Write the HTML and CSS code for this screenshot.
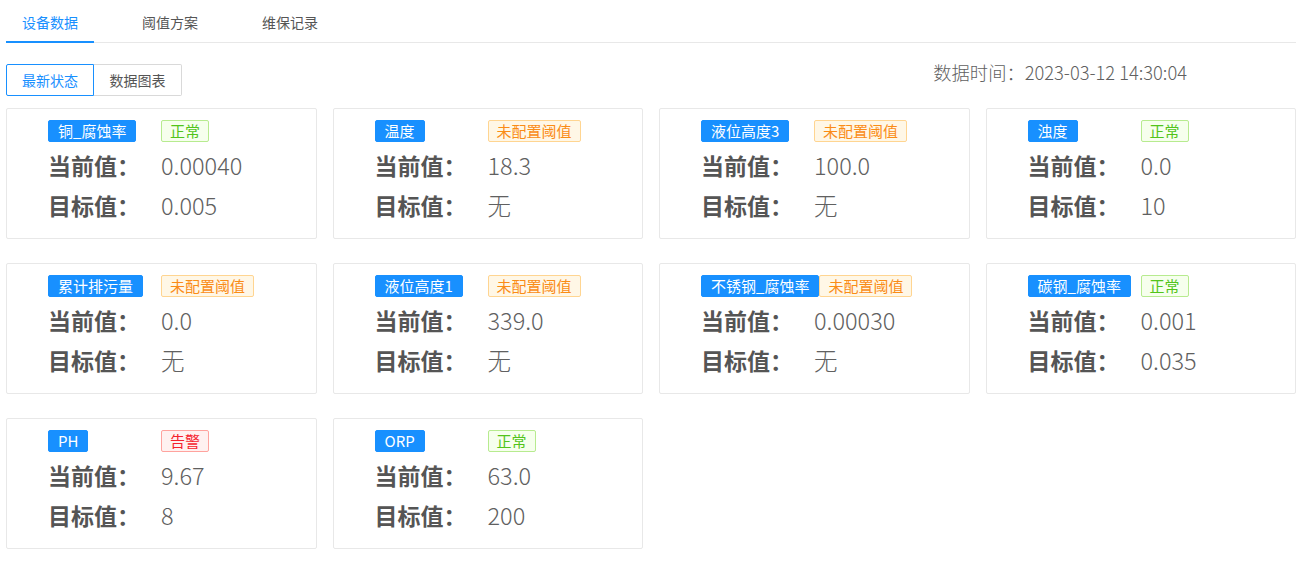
FILE: index.html
```html
<!DOCTYPE html>
<html lang="zh">
<head>
<meta charset="utf-8">
<title>设备数据</title>
<link rel="stylesheet" href="styles.css">
</head>
<body>
<div class="page">
  <div class="tabs">
    <div class="tab active">设备数据</div>
    <div class="tab">阈值方案</div>
    <div class="tab">维保记录</div>
  </div>
  <div class="toolbar">
    <div class="btn-group">
      <div class="btn active">最新状态</div>
      <div class="btn">数据图表</div>
    </div>
    <div class="time">数据时间：2023-03-12 14:30:04</div>
  </div>
  <div class="grid">
    <div class="card">
      <div class="head"><div class="name-wrap"><span class="name">铜_腐蚀率</span></div><span class="status ok">正常</span></div>
      <div class="row"><span class="label">当前值：</span><span class="value">0.00040</span></div>
      <div class="row"><span class="label">目标值：</span><span class="value">0.005</span></div>
    </div>
    <div class="card">
      <div class="head"><div class="name-wrap"><span class="name">温度</span></div><span class="status none">未配置阈值</span></div>
      <div class="row"><span class="label">当前值：</span><span class="value">18.3</span></div>
      <div class="row"><span class="label">目标值：</span><span class="value">无</span></div>
    </div>
    <div class="card">
      <div class="head"><div class="name-wrap"><span class="name">液位高度3</span></div><span class="status none">未配置阈值</span></div>
      <div class="row"><span class="label">当前值：</span><span class="value">100.0</span></div>
      <div class="row"><span class="label">目标值：</span><span class="value">无</span></div>
    </div>
    <div class="card">
      <div class="head"><div class="name-wrap"><span class="name">浊度</span></div><span class="status ok">正常</span></div>
      <div class="row"><span class="label">当前值：</span><span class="value">0.0</span></div>
      <div class="row"><span class="label">目标值：</span><span class="value">10</span></div>
    </div>
    <div class="card">
      <div class="head"><div class="name-wrap"><span class="name">累计排污量</span></div><span class="status none">未配置阈值</span></div>
      <div class="row"><span class="label">当前值：</span><span class="value">0.0</span></div>
      <div class="row"><span class="label">目标值：</span><span class="value">无</span></div>
    </div>
    <div class="card">
      <div class="head"><div class="name-wrap"><span class="name">液位高度1</span></div><span class="status none">未配置阈值</span></div>
      <div class="row"><span class="label">当前值：</span><span class="value">339.0</span></div>
      <div class="row"><span class="label">目标值：</span><span class="value">无</span></div>
    </div>
    <div class="card">
      <div class="head"><div class="name-wrap"><span class="name">不锈钢_腐蚀率</span></div><span class="status none">未配置阈值</span></div>
      <div class="row"><span class="label">当前值：</span><span class="value">0.00030</span></div>
      <div class="row"><span class="label">目标值：</span><span class="value">无</span></div>
    </div>
    <div class="card">
      <div class="head"><div class="name-wrap"><span class="name">碳钢_腐蚀率</span></div><span class="status ok">正常</span></div>
      <div class="row"><span class="label">当前值：</span><span class="value">0.001</span></div>
      <div class="row"><span class="label">目标值：</span><span class="value">0.035</span></div>
    </div>
    <div class="card">
      <div class="head"><div class="name-wrap"><span class="name">PH</span></div><span class="status warn">告警</span></div>
      <div class="row"><span class="label">当前值：</span><span class="value">9.67</span></div>
      <div class="row"><span class="label">目标值：</span><span class="value">8</span></div>
    </div>
    <div class="card">
      <div class="head"><div class="name-wrap"><span class="name">ORP</span></div><span class="status ok">正常</span></div>
      <div class="row"><span class="label">当前值：</span><span class="value">63.0</span></div>
      <div class="row"><span class="label">目标值：</span><span class="value">200</span></div>
    </div>
  </div>
</div>
</body>
</html>
```

FILE: styles.css
```css
* { box-sizing: border-box; }
html, body { margin: 0; padding: 0; background: #fff; }
body {
  font-family: "Noto Sans CJK SC", "Noto Sans", sans-serif;
  color: #606266;
}
.page { padding: 0 6px; }

.tabs {
  display: flex;
  gap: 32px;
  border-bottom: 1px solid #e8e8e8;
  height: 43px;
}
.tab {
  padding: 12px 16px 0;
  font-size: 14px;
  line-height: 20px;
  color: #555;
  height: 43px;
  border-bottom: 2px solid transparent;
  margin-bottom: -1px;
}
.tab.active {
  color: #1890ff;
  border-bottom-color: #1890ff;
}

.toolbar {
  display: flex;
  justify-content: space-between;
  align-items: flex-start;
  margin-top: 21px;
  padding-right: 109px;
}
.btn-group { display: flex; }
.btn {
  width: 88px;
  height: 32px;
  line-height: 30px;
  text-align: center;
  font-size: 14px;
  color: #555;
  border: 1px solid #d9d9d9;
  background: #fff;
}
.btn:first-child { border-radius: 2px 0 0 2px; }
.btn:last-child { border-radius: 0 2px 2px 0; border-left: none; }
.btn.active { color: #1890ff; border-color: #1890ff; }
.time {
  font-size: 18.3px;
  font-weight: 300;
  line-height: 20px;
  color: #606060;
  margin-top: -2px;
}

.grid {
  margin-top: 12px;
  display: grid;
  grid-template-columns: repeat(4, 1fr);
  column-gap: 16px;
  row-gap: 24px;
}
.card {
  border: 1px solid #e8e8e8;
  border-radius: 2px;
  height: 131px;
  padding: 11px 10px 8px 41px;
}
.head {
  display: flex;
  align-items: center;
  height: 22px;
  margin-bottom: 3px;
}
.name-wrap { min-width: 113px; display: flex; }
.name {
  display: inline-block;
  background: #1890ff;
  color: #fff;
  font-size: 15px;
  line-height: 20px;
  padding: 0 9px;
  border: 1px solid #1890ff;
  border-radius: 2px;
  white-space: nowrap;
}
.status {
  display: inline-block;
  font-size: 15px;
  line-height: 20px;
  padding: 0 8px;
  border: 1px solid;
  border-radius: 2px;
  white-space: nowrap;
}
.status.ok { color: #52c41a; background: #f6ffed; border-color: #b7eb8f; }
.status.none { color: #fa8c16; background: #fff7e6; border-color: #ffd591; }
.status.warn { color: #f5222d; background: #fff1f0; border-color: #ffa39e; }

.row {
  display: flex;
  align-items: center;
  height: 40px;
}
.label {
  width: 113px;
  font-size: 23px;
  font-weight: bold;
  color: #555;
}
.value {
  font-size: 23.5px;
  font-weight: 300;
  color: #606060;
}
```
